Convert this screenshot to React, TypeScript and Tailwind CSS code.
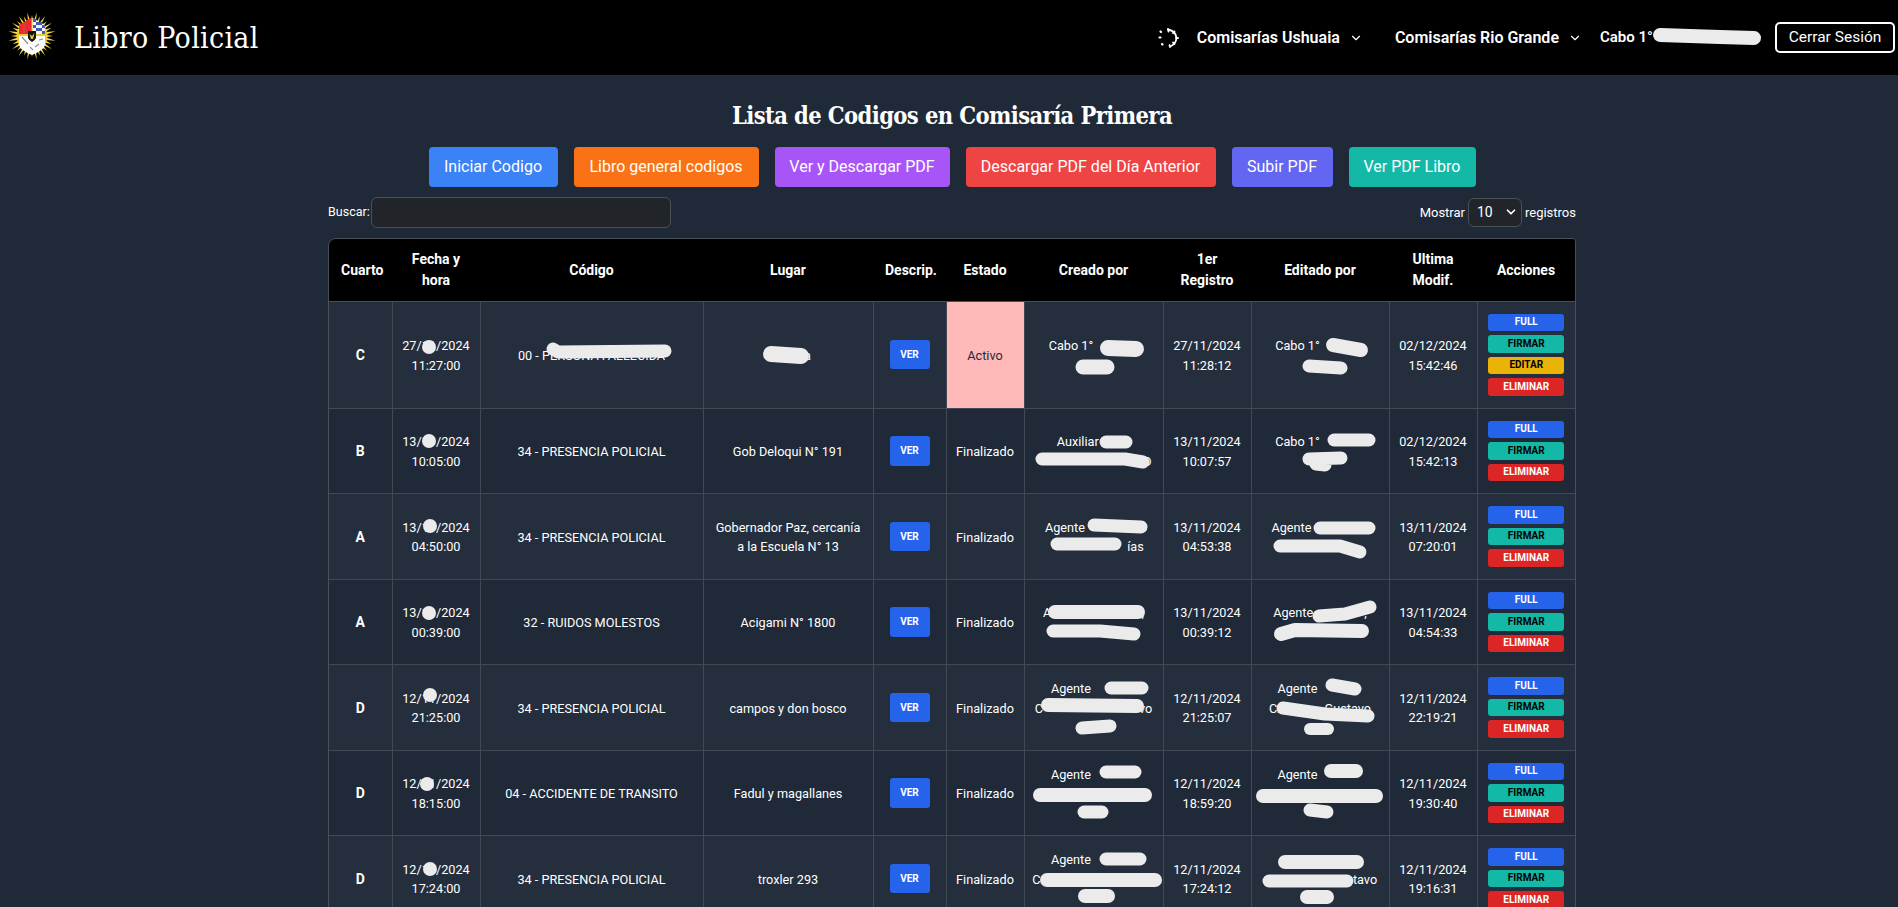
import { ChevronDown } from "lucide-react";

type Row = {
  cuarto: string;
  fecha: string;
  hora: string;
  codigo: string;
  lugar: string[];
  estado: string;
  creado: string[];
  registro: string[];
  editado: string[];
  modif: string[];
  editar?: boolean;
};

const rows: Row[] = [
  { cuarto: "C", fecha: "27/11/2024", hora: "11:27:00", codigo: "00 - PERSONA FALLECIDA", lugar: ["Ushuaia"], estado: "Activo", creado: ["Cabo 1° #######", "#######"], registro: ["27/11/2024", "11:28:12"], editado: ["Cabo 1° #######", "#######"], modif: ["02/12/2024", "15:42:46"], editar: true },
  { cuarto: "B", fecha: "13/11/2024", hora: "10:05:00", codigo: "34 - PRESENCIA POLICIAL", lugar: ["Gob Deloqui N° 191"], estado: "Finalizado", creado: ["Auxiliar ####r", "##################D"], registro: ["13/11/2024", "10:07:57"], editado: ["Cabo 1° #######", "#######"], modif: ["02/12/2024", "15:42:13"] },
  { cuarto: "A", fecha: "13/11/2024", hora: "04:50:00", codigo: "34 - PRESENCIA POLICIAL", lugar: ["Gobernador Paz, cercanía", "a la Escuela N° 13"], estado: "Finalizado", creado: ["Agente #########", "##############ías"], registro: ["13/11/2024", "04:53:38"], editado: ["Agente #########", "################"], modif: ["13/11/2024", "07:20:01"] },
  { cuarto: "A", fecha: "13/11/2024", hora: "00:39:00", codigo: "32 - RUIDOS MOLESTOS", lugar: ["Acigami N° 1800"], estado: "Finalizado", creado: ["A###############,", "###############"], registro: ["13/11/2024", "00:39:12"], editado: ["Agente ########,", "###############"], modif: ["13/11/2024", "04:54:33"] },
  { cuarto: "D", fecha: "12/11/2024", hora: "21:25:00", codigo: "34 - PRESENCIA POLICIAL", lugar: ["campos y don bosco"], estado: "Finalizado", creado: ["Agente #######", "C################vo", "####"], registro: ["12/11/2024", "21:25:07"], editado: ["Agente #######", "CA###### Gustavo", "####"], modif: ["12/11/2024", "22:19:21"] },
  { cuarto: "D", fecha: "12/11/2024", hora: "18:15:00", codigo: "04 - ACCIDENTE DE TRANSITO", lugar: ["Fadul y magallanes"], estado: "Finalizado", creado: ["Agente #######", "###################", "####"], registro: ["12/11/2024", "18:59:20"], editado: ["Agente #######", "####################", "####"], modif: ["12/11/2024", "19:30:40"] },
  { cuarto: "D", fecha: "12/11/2024", hora: "17:24:00", codigo: "34 - PRESENCIA POLICIAL", lugar: ["troxler 293"], estado: "Finalizado", creado: ["Agente #######", "C###################", "####"], registro: ["12/11/2024", "17:24:12"], editado: ["##############", "###############tavo", "####"], modif: ["12/11/2024", "19:16:31"] },
];

const topButtons = [
  { label: "Iniciar Codigo", cls: "w-[129px] bg-[#3b82f6]" },
  { label: "Libro general codigos", cls: "w-[185px] bg-[#f97316]" },
  { label: "Ver y Descargar PDF", cls: "w-[175px] bg-[#a855f7]" },
  { label: "Descargar PDF del Día Anterior", cls: "w-[250px] bg-[#ef4444]" },
  { label: "Subir PDF", cls: "w-[101px] bg-[#6366f1]" },
  { label: "Ver PDF Libro", cls: "w-[127px] bg-[#14b8a6]" },
];

const headers = ["Cuarto", "Fecha y hora", "Código", "Lugar", "Descrip.", "Estado", "Creado por", "1er Registro", "Editado por", "Ultima Modif.", "Acciones"];

// tachaduras a mano sobre los nombres
const scribbles: [string, number][] = [
  ["M1660 35 L1720 37 L1754 38", 14],
  ["M553 349 L558 352 L665 351", 13],
  ["M771 354 L801 356", 16],
  ["M1108 348 L1136 349", 16],
  ["M1083 367 L1107 367", 15],
  ["M1333 345 L1361 350", 14],
  ["M1309 366 L1341 368", 13],
  ["M1106 442 L1126 442", 13],
  ["M1042 459 L1125 459 L1143 462", 13],
  ["M1334 440 L1369 440", 13],
  ["M1309 459 L1341 458 M1316 464 L1325 465", 13],
  ["M1094 525 L1141 527", 13],
  ["M1057 544 L1115 544", 13],
  ["M1320 528 L1369 528", 13],
  ["M1280 546 L1340 546 L1360 552", 13],
  ["M1055 612 L1138 612", 14],
  ["M1053 631 L1100 631 L1134 634", 13],
  ["M1319 616 L1345 614 L1370 607", 13],
  ["M1281 634 L1295 630 L1362 631", 14],
  ["M1111 688 L1142 688", 13],
  ["M1048 705 L1137 706", 14],
  ["M1082 728 L1110 726", 13],
  ["M1332 685 L1355 689", 13],
  ["M1283 708 L1325 714 L1368 716", 13],
  ["M1310 729 L1328 729", 12],
  ["M1106 772 L1135 772", 13],
  ["M1040 795 L1145 795", 14],
  ["M1084 812 L1102 812", 13],
  ["M1331 771 L1356 771", 14],
  ["M1263 796 L1376 796", 14],
  ["M1310 810 L1327 812", 13],
  ["M1106 859 L1140 859", 13],
  ["M1047 880 L1155 880", 14],
  ["M1085 896 L1108 896", 14],
  ["M1285 862 L1357 862", 14],
  ["M1269 881 L1347 881", 13],
  ["M1307 897 L1327 897", 14],
];

const dots = [
  [429, 347],
  [429, 441],
  [430, 526],
  [429, 613],
  [430, 695],
  [427, 784],
  [430, 869],
];

function Logo() {
  const rays = Array.from({ length: 32 }, (_, i) => (i * Math.PI * 2) / 32);
  return (
    <svg viewBox="0 0 48 48" className="-mt-[3px] h-12 w-12 shrink-0">
      {rays.map((a, i) => {
        const r = i % 2 ? 24 : 21;
        const p = 0.075;
        const pts = [
          [24 + Math.cos(a - p) * 15, 24 + Math.sin(a - p) * 15],
          [24 + Math.cos(a) * r, 24 + Math.sin(a) * r],
          [24 + Math.cos(a + p) * 15, 24 + Math.sin(a + p) * 15],
        ];
        return <polygon key={i} points={pts.map((q) => q.join(",")).join(" ")} fill="#f6dc45" />;
      })}
      <circle cx="24" cy="24" r="15.5" fill="#eecb30" />
      <path d="M11 13 L23.5 5.5 L23.5 22 L11 22 Z" fill="#ea2a2f" />
      <path d="M15 11 h2 v10 h-2 Z" fill="#c9473c" />
      <path d="M24.5 6 L37 13 L37 22 L24.5 22 Z" fill="#f4f6fb" />
      <g fill="#3f5cb0">
        <rect x="25" y="7" width="3" height="3" />
        <rect x="31" y="10" width="3" height="3" />
        <rect x="28" y="10" width="3" height="3" />
        <rect x="25" y="13" width="3" height="3" />
        <rect x="34" y="13" width="3" height="3" />
        <rect x="31" y="16" width="3" height="3" />
        <rect x="28" y="16" width="3" height="3" />
        <rect x="25" y="19" width="3" height="3" />
        <rect x="34" y="19" width="3" height="3" />
      </g>
      <path d="M11 24 L37 24 L37 33 Q36 38 24 43 Q12 38 11 33 Z" fill="#fff" />
      <path d="M20 19 L28 19 L28 26 Q27 28.5 24 30 Q21 28.5 20 26 Z" fill="#111" />
      <path d="M21.5 22 L24 24 L26.5 21 L25 27 L23 27 Z" fill="#e8c22c" />
      <path d="M14 25 L20 32 M31 28 L35 27 M27 35 L31 32 M22 35 L25 38" stroke="#8a8f96" strokeWidth="1.2" />
    </svg>
  );
}

function Spinner() {
  return (
    <svg viewBox="0 0 24 24" className="h-6 w-6 text-white" fill="none" stroke="currentColor" strokeWidth="1.8" strokeLinecap="round">
      <path d="M12 3.5 Q20 5 20.5 12 Q20 18 14 20.5" />
      <path d="M12 3 L12.5 5.5 M18.5 5.5 L17 7 M22 12 L20 12 M18.5 18 L17 16.5 M14 21 L13.5 19" />
      <path d="M4.5 5.5 L5 6 M3.5 11.5 L4.5 11.5 M6 18 L6.5 18.5" strokeWidth="2.2" />
    </svg>
  );
}

function NavItem({ label }: { label: string }) {
  return (
    <div className="flex items-center gap-[9px] text-[16px] font-semibold text-white">
      <span>{label}</span>
      <ChevronDown className="h-[14px] w-[14px]" strokeWidth={2} />
    </div>
  );
}

// lo tapado con # no se ve: solo ocupa su ancho debajo de la tachadura
function Line({ text }: { text: string }) {
  const parts = text.split(/(#+)/).filter(Boolean);
  return (
    <div className="whitespace-nowrap">
      {parts.map((p, i) =>
        p[0] === "#" ? (
          <span key={i} className="inline-block" style={{ width: p.length * 6 }} />
        ) : (
          <span key={i}>{p}</span>
        ),
      )}
    </div>
  );
}

function Lines({ items }: { items: string[] }) {
  return (
    <>
      {items.map((t, i) => (
        <Line key={i} text={t} />
      ))}
    </>
  );
}

function ActionButton({ label, cls }: { label: string; cls: string }) {
  return <button className={`block h-[17.5px] w-[76px] rounded-[3px] text-[10px] leading-none font-bold ${cls}`}>{label}</button>;
}

export default function App() {
  return (
    <div className="relative h-screen overflow-hidden bg-[#1f2937] font-['Roboto',sans-serif] text-white">
      {/* Navbar */}
      <nav className="flex h-[75px] items-center bg-black pr-[3px] pl-[8px]">
        <Logo />
        <span className="ml-[18px] font-['DejaVu_Serif_Condensed','DejaVu_Serif',serif] text-[30px] tracking-[0.3px]">Libro Policial</span>
        <div className="ml-auto flex items-center">
          <Spinner />
          <div className="ml-[17px]">
            <NavItem label="Comisarías Ushuaia" />
          </div>
          <div className="ml-[32px]">
            <NavItem label="Comisarías Rio Grande" />
          </div>
          <span className="ml-[18px] w-[175px] text-[15px] font-semibold">Cabo 1°</span>
          <button className="h-[31px] w-[120px] rounded-[5px] border-2 border-white text-[15.5px]">Cerrar Sesión</button>
        </div>
      </nav>

      <main className="mx-auto w-[1248px] translate-x-[3px]">
        <h1 className="mt-[23px] text-center font-['DejaVu_Serif_Condensed','DejaVu_Serif',serif] text-[23.5px] leading-[36px] font-bold tracking-[-0.6px]">
          Lista de Codigos en Comisaría Primera
        </h1>

        <div className="mt-[13px] flex justify-center gap-4">
          {topButtons.map((b) => (
            <button key={b.label} className={`h-10 rounded text-[16px] text-white ${b.cls}`}>
              {b.label}
            </button>
          ))}
        </div>

        <div className="mt-[10px] flex h-[31px] items-center justify-between text-[13px]">
          <div className="flex items-center">
            <label className="w-[43px] text-[12.5px]">Buscar:</label>
            <input className="h-[31px] w-[300px] rounded-md border border-[#495057] bg-[#212529]" />
          </div>
          <div className="flex items-center gap-[3px]">
            <span>Mostrar</span>
            <div className="relative">
              <select className="h-[29px] w-[54px] appearance-none rounded-md border border-[#495057] bg-[#212529] pl-[8px] text-[14px]">
                <option>10</option>
              </select>
              <ChevronDown className="absolute top-[7px] right-[4px] h-[14px] w-[14px]" strokeWidth={3} />
            </div>
            <span>registros</span>
          </div>
        </div>

        <div className="mt-[10px] overflow-hidden rounded-tl-lg rounded-tr-sm border border-[#495057]">
          <table className="w-full table-fixed border-collapse text-center text-[12.7px] leading-[19.5px]">
            <colgroup>
              <col className="w-[63px]" />
              <col className="w-[88px]" />
              <col className="w-[223px]" />
              <col className="w-[170px]" />
              <col className="w-[73px]" />
              <col className="w-[78px]" />
              <col className="w-[139px]" />
              <col className="w-[88px]" />
              <col className="w-[138px]" />
              <col className="w-[88px]" />
              <col />
            </colgroup>
            <thead>
              <tr className="bg-black">
                {headers.map((h) => (
                  <th key={h} className="border-b border-[#495057] px-3 pt-[10px] pb-[9.5px] text-[14px] leading-[21px] font-bold">
                    {h}
                  </th>
                ))}
              </tr>
            </thead>
            <tbody>
              {rows.map((r, i) => (
                <tr key={i} className={i % 2 === 0 ? "bg-[#252e3d]" : "bg-[#1f2937]"}>
                  <td className="border border-[#414956] border-l-0 pt-[2px] text-[14px] font-bold">{r.cuarto}</td>
                  <td className="border border-[#414956] pt-[2px]">
                    <div>{r.fecha}</div>
                    <div>{r.hora}</div>
                  </td>
                  <td className="border border-[#414956] pt-[2px]">{r.codigo}</td>
                  <td className="border border-[#414956] pt-[2px]">
                    <Lines items={r.lugar} />
                  </td>
                  <td className="border border-[#414956]">
                    <button className="h-[29.5px] w-10 rounded-[3px] bg-[#2563eb] text-[10px] font-bold">VER</button>
                  </td>
                  <td className={`border border-[#414956] pt-[2px] ${r.estado === "Activo" ? "bg-[#ffb9b9] text-[#1f2937]" : ""}`}>{r.estado}</td>
                  <td className="border border-[#414956] pt-[2px]">
                    <Lines items={r.creado} />
                  </td>
                  <td className="border border-[#414956] pt-[2px]">
                    <Lines items={r.registro} />
                  </td>
                  <td className="border border-[#414956] pt-[2px]">
                    <Lines items={r.editado} />
                  </td>
                  <td className="border border-[#414956] pt-[2px]">
                    <Lines items={r.modif} />
                  </td>
                  <td className="border border-[#414956] border-r-0 py-3">
                    <div className="flex flex-col items-center gap-1">
                      <ActionButton label="FULL" cls="bg-[#2563eb] text-white" />
                      <ActionButton label="FIRMAR" cls="bg-[#14b8a6] text-black" />
                      {r.editar && <ActionButton label="EDITAR" cls="bg-[#eab308] text-black" />}
                      <ActionButton label="ELIMINAR" cls="bg-[#dc2626] text-white" />
                    </div>
                  </td>
                </tr>
              ))}
            </tbody>
          </table>
        </div>
      </main>

      <svg className="pointer-events-none absolute top-0 left-0 h-[907px] w-[1898px]" viewBox="0 0 1898 907" fill="none">
        {scribbles.map(([d, w], i) => (
          <path key={i} d={d} stroke="#ebebeb" strokeWidth={w} strokeLinecap="round" strokeLinejoin="round" />
        ))}
        {dots.map(([x, y], i) => (
          <circle key={i} cx={x} cy={y} r="7" fill="#ebebeb" />
        ))}
      </svg>
    </div>
  );
}
